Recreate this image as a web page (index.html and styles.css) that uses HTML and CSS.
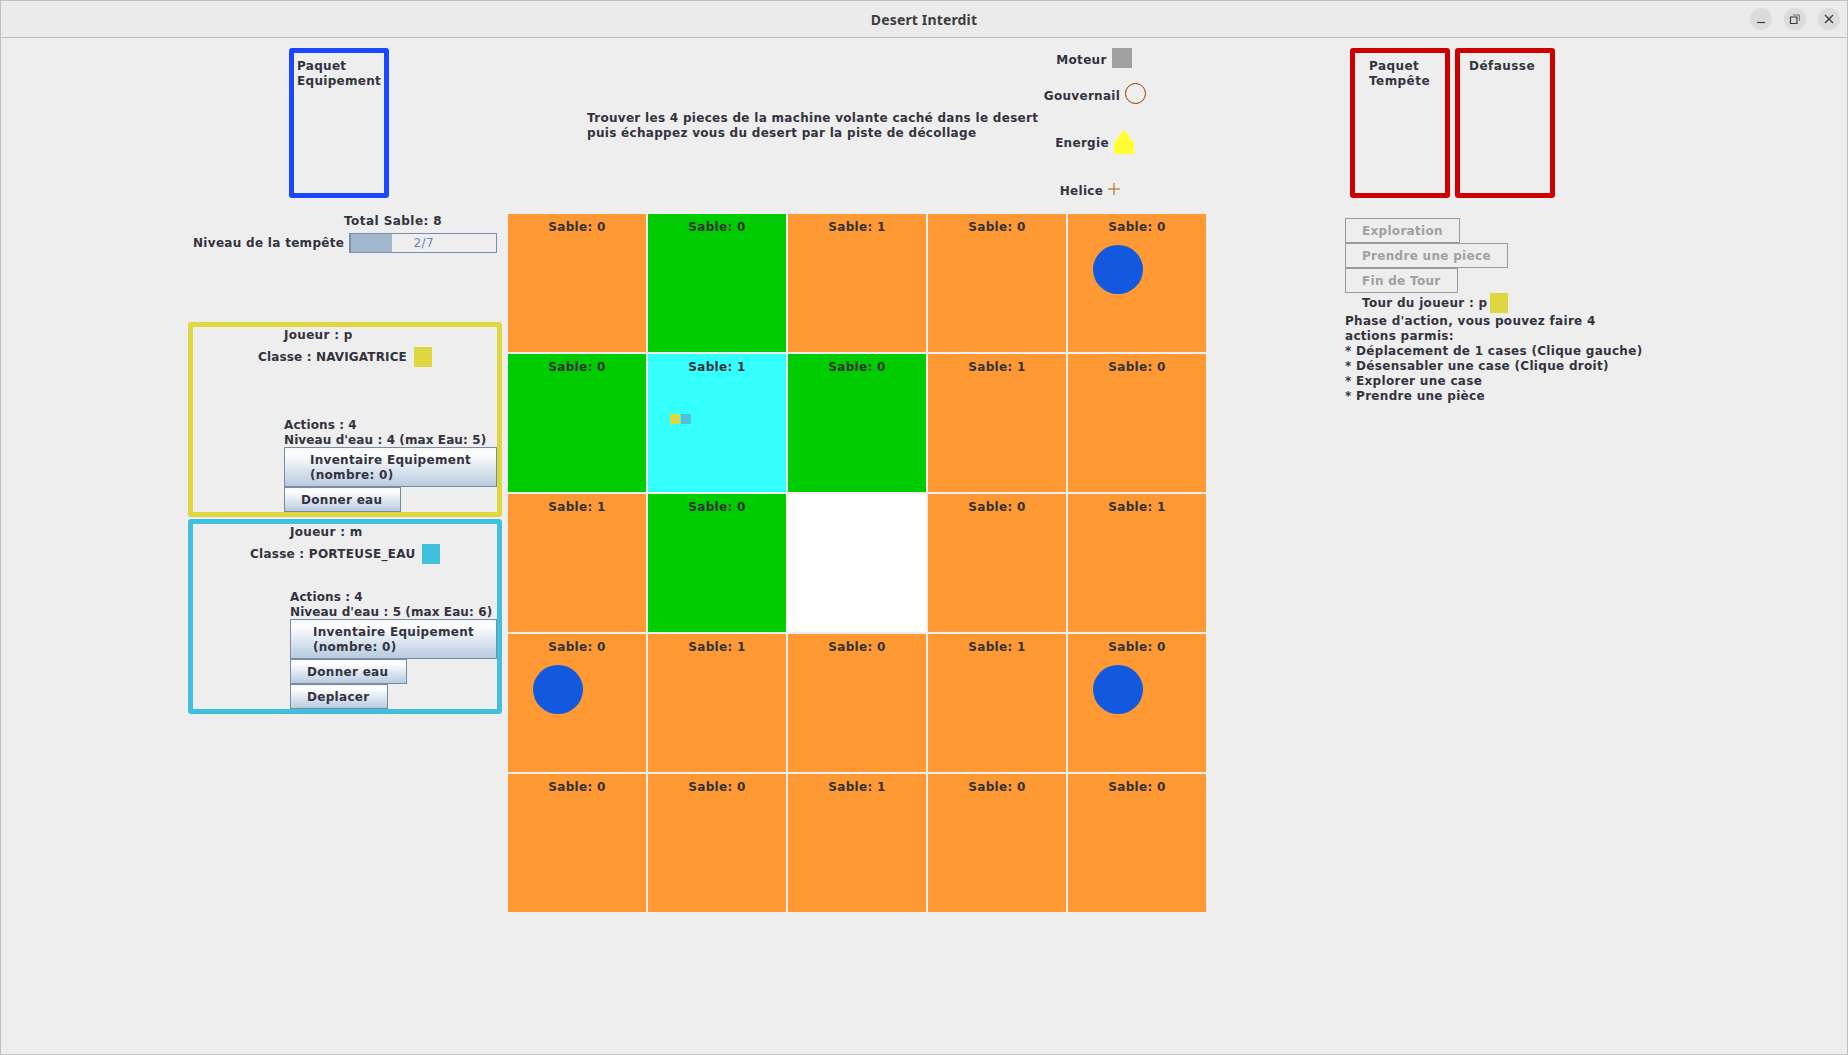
FILE: index.html
```html
<!DOCTYPE html>
<html lang="fr">
<head>
    <meta charset="UTF-8">
    <meta name="viewport" content="width=device-width, initial-scale=1.0">
    <title>Desert Interdit</title>
    <link rel="stylesheet" href="styles.css">
</head>
<body>
    <div class="window">
        <div class="titlebar">
            <div class="title">Desert Interdit</div>
            <div class="win-buttons">
                <div class="win-btn">
                    <svg width="12" height="12" viewBox="0 0 12 12"><path d="M2 9.500h8" stroke="#3d3d3d" stroke-width="1.2" fill="none"/></svg>
                </div>
                <div class="win-btn">
                    <svg width="12" height="12" viewBox="0 0 12 12"><path d="M1.500 4h6.500v6.500h-6.500z" stroke="#3d3d3d" stroke-width="1.2" fill="none"/><path d="M4 2h6.500v6" stroke="#777" stroke-width="1" fill="none"/></svg>
                </div>
                <div class="win-btn">
                    <svg width="12" height="12" viewBox="0 0 12 12"><path d="M2 2l8 8M10 2l-8 8" stroke="#3d3d3d" stroke-width="1.4" fill="none"/></svg>
                </div>
            </div>
        </div>

        <div class="content">
            <div class="top-left">
                <div class="deck deck-blue">Paquet<br>Equipement</div>
            </div>

            <div class="top-center">
                <div class="goal">Trouver les 4 pieces de la machine volante caché dans le desert<br>puis échappez vous du desert par la piste de décollage</div>
                <div class="legend">
                    <div class="legend-row moteur"><span>Moteur</span><div class="piece-square"></div></div>
                    <div class="legend-row gouvernail"><span>Gouvernail</span><div class="piece-circle"></div></div>
                    <div class="legend-row energie"><span>Energie</span>
                        <svg class="piece-energy" width="20" height="25" viewBox="0 0 20 25"><path d="M10 0L20 14V25H0V14Z" fill="#ffff33"/></svg>
                    </div>
                    <div class="legend-row helice"><span>Helice</span>
                        <svg class="piece-helice" width="12" height="12" viewBox="0 0 12 12"><path d="M6 0v12M0 6h12" stroke="#b35900" stroke-width="1" fill="none"/></svg>
                    </div>
                </div>
            </div>

            <div class="top-right">
                <div class="deck deck-red deck-tempete">Paquet<br>Tempête</div>
                <div class="deck deck-red deck-defausse">Défausse</div>
            </div>

            <div class="left-col">
                <div class="total-sable">Total Sable: 8</div>
                <div class="storm">
                    <span>Niveau de la tempête</span>
                    <div class="storm-bar"><div class="storm-fill"></div><div class="storm-text">2/7</div></div>
                </div>

                <div class="player player-yellow">
                    <div class="player-name">Joueur : p</div>
                    <div class="player-class"><span>Classe : NAVIGATRICE</span><div class="swatch"></div></div>
                    <div class="player-bottom">
                        <div class="stat">Actions : 4</div>
                        <div class="stat">Niveau d'eau : 4 (max Eau: 5)</div>
                        <button class="btn btn-inv"><span>Inventaire Equipement<br>(nombre: 0)</span></button>
                        <button class="btn btn-small">Donner eau</button>
                    </div>
                </div>

                <div class="player player-blue">
                    <div class="player-name">Joueur : m</div>
                    <div class="player-class"><span>Classe : PORTEUSE_EAU</span><div class="swatch"></div></div>
                    <div class="player-bottom">
                        <div class="stat">Actions : 4</div>
                        <div class="stat">Niveau d'eau : 5 (max Eau: 6)</div>
                        <button class="btn btn-inv"><span>Inventaire Equipement<br>(nombre: 0)</span></button>
                        <button class="btn btn-small">Donner eau</button>
                        <button class="btn btn-small">Deplacer</button>
                    </div>
                </div>
            </div>

            <div class="board">
                <div class="cell orange"><div class="sable">Sable: 0</div></div>
                <div class="cell green"><div class="sable">Sable: 0</div></div>
                <div class="cell orange"><div class="sable">Sable: 1</div></div>
                <div class="cell orange"><div class="sable">Sable: 0</div></div>
                <div class="cell orange"><div class="sable">Sable: 0</div><div class="well"></div></div>

                <div class="cell green"><div class="sable">Sable: 0</div></div>
                <div class="cell cyan"><div class="sable">Sable: 1</div>
                    <div class="pawns"><div class="pawn pawn-yellow"></div><div class="pawn pawn-blue"></div></div>
                </div>
                <div class="cell green"><div class="sable">Sable: 0</div></div>
                <div class="cell orange"><div class="sable">Sable: 1</div></div>
                <div class="cell orange"><div class="sable">Sable: 0</div></div>

                <div class="cell orange"><div class="sable">Sable: 1</div></div>
                <div class="cell green"><div class="sable">Sable: 0</div></div>
                <div class="cell white"></div>
                <div class="cell orange"><div class="sable">Sable: 0</div></div>
                <div class="cell orange"><div class="sable">Sable: 1</div></div>

                <div class="cell orange"><div class="sable">Sable: 0</div><div class="well"></div></div>
                <div class="cell orange"><div class="sable">Sable: 1</div></div>
                <div class="cell orange"><div class="sable">Sable: 0</div></div>
                <div class="cell orange"><div class="sable">Sable: 1</div></div>
                <div class="cell orange"><div class="sable">Sable: 0</div><div class="well"></div></div>

                <div class="cell orange"><div class="sable">Sable: 0</div></div>
                <div class="cell orange"><div class="sable">Sable: 0</div></div>
                <div class="cell orange"><div class="sable">Sable: 1</div></div>
                <div class="cell orange"><div class="sable">Sable: 0</div></div>
                <div class="cell orange"><div class="sable">Sable: 0</div></div>
            </div>

            <div class="right-col">
                <button class="btn-off">Exploration</button>
                <button class="btn-off">Prendre une piece</button>
                <button class="btn-off">Fin de Tour</button>
                <div class="turn"><span>Tour du joueur : p</span><div class="swatch"></div></div>
                <div class="help">Phase d'action, vous pouvez faire 4<br>actions parmis:<br>* Déplacement de 1 cases (Clique gauche)<br>* Désensabler une case (Clique droit)<br>* Explorer une case<br>* Prendre une pièce</div>
            </div>
        </div>
    </div>
</body>
</html>
```

FILE: styles.css
```css
* {
    box-sizing: border-box;
}
body {
    margin: 0;
    font-family: 'DejaVu Sans', sans-serif;
    font-size: 12px;
    font-weight: bold;
    line-height: 15px;
    letter-spacing: 0.3px;
    color: #333340;
}
.window {
    width: 1848px;
    height: 1055px;
    background: #eeeeee;
    border: 1px solid #c0c0c0;
    border-bottom-color: #c8c8c8;
    overflow: hidden;
}
.titlebar {
    height: 37px;
    background: #ebebeb;
    border-bottom: 1px solid #bdbdbd;
    display: flex;
    align-items: center;
    justify-content: center;
    position: relative;
}
.title {
    font-family: 'Noto Sans', sans-serif;
    font-size: 14px;
    letter-spacing: 0.15px;
    color: #3d3d3d;
}
.win-buttons {
    position: absolute;
    right: 7px;
    top: 7px;
    display: flex;
    gap: 12px;
}
.win-btn {
    width: 22px;
    height: 22px;
    border-radius: 50%;
    background: #dcdcdc;
    display: flex;
    align-items: center;
    justify-content: center;
}

.content {
    display: grid;
    grid-template-columns: 507px 698px 1fr;
    grid-template-rows: 174px 1fr;
}

/* decks */
.deck {
    width: 100px;
    height: 150px;
    border: 5px solid;
    border-radius: 3px;
}
.deck-blue {
    border-color: #1a47ff;
    padding: 6px 0 0 3px;
}
.deck-red {
    border-color: #cc0000;
    letter-spacing: 0.45px;
}
.deck-tempete {
    padding: 6px 0 0 14px;
}
.deck-defausse {
    padding: 6px 0 0 9px;
}
.top-left {
    padding: 10px 0 0 288px;
}
.top-right {
    padding: 10px 0 0 144px;
    display: flex;
    gap: 5px;
}

/* goal + legend */
.top-center {
    display: flex;
    align-items: center;
}
.goal {
    margin-left: 79px;
    padding-top: 2px;
    width: 453px;
    white-space: nowrap;
}
.legend {
    width: 110px;
    align-self: flex-start;
    padding-top: 10px;
    display: flex;
    flex-direction: column;
    align-items: center;
}
.legend-row {
    display: flex;
    align-items: center;
    gap: 5px;
    white-space: nowrap;
}
.moteur {
    align-items: flex-end;
    margin-right: 2px;
}
.gouvernail {
    margin-top: 15px;
}
.gouvernail span {
    padding-top: 5px;
}
.energie {
    margin-top: 25px;
    margin-right: 1px;
}
.energie span {
    padding-top: 3px;
}
.helice {
    margin-top: 27px;
    margin-right: 10px;
}
.helice span {
    padding-top: 3px;
}
.piece-square {
    width: 20px;
    height: 20px;
    background: #a0a0a0;
}
.piece-circle {
    width: 21px;
    height: 21px;
    border: 1px solid #993300;
    border-radius: 50%;
}
.piece-helice {
    margin-top: -3px;
}

/* left column */
.left-col {
    padding-left: 187px;
}
.total-sable {
    margin-top: 2px;
    padding-left: 156px;
    letter-spacing: 0.45px;
    white-space: nowrap;
}
.storm {
    display: flex;
    align-items: center;
    margin-top: 4px;
    padding-left: 5px;
    gap: 5px;
    white-space: nowrap;
}
.storm span {
    padding-top: 1px;
}
.storm-bar {
    width: 148px;
    height: 20px;
    border: 1px solid #7a8fb0;
    border-left-width: 2px;
    background: #eeeeee;
    position: relative;
}
.storm-fill {
    width: 41px;
    height: 100%;
    background: #a3b8cc;
}
.storm-text {
    position: absolute;
    inset: 0;
    text-align: center;
    font-weight: normal;
    color: #6a80c4;
    line-height: 19px;
}

.player {
    width: 314px;
    height: 195px;
    border: 5px solid;
    border-radius: 3px;
    display: flex;
    flex-direction: column;
}
.player-yellow {
    margin-top: 69px;
    border-color: #dfd73f;
    --pad: 91px;
    --pad-class: 65px;
}
.player-blue {
    margin-top: 2px;
    border-color: #40c0dd;
    --pad: 97px;
    --pad-class: 57px;
}
.player-name {
    padding: 1px 0 0 var(--pad);
}
.player-class {
    display: flex;
    align-items: center;
    gap: 7px;
    margin-top: 4px;
    padding-left: var(--pad-class);
    letter-spacing: 0.15px;
    white-space: nowrap;
}
.player-blue .player-class {
    letter-spacing: 0.25px;
}
.player-class span {
    padding-top: 1px;
}
.player-yellow .swatch, .turn .swatch {
    background: #dfd73f;
}
.player-blue .swatch {
    background: #40c0dd;
}
.swatch {
    width: 18px;
    height: 20px;
}
.player-bottom {
    margin-top: auto;
    padding-left: var(--pad);
    display: flex;
    flex-direction: column;
    white-space: nowrap;
}
.stat {
    height: 15px;
    padding-top: 2px;
    line-height: 13px;
    letter-spacing: 0.1px;
}
.btn, .btn-off {
    font: inherit;
    letter-spacing: 0.3px;
    color: inherit;
    text-align: left;
    display: block;
    height: 25px;
    padding: 2px 18px 0 16px;
    margin: 0;
    border-radius: 0;
    white-space: nowrap;
}
.btn {
    border: 1px solid #7a8a9f;
    background: linear-gradient(to bottom, #f4f8fc, #fff 15%, #b8cbe0);
    align-self: flex-start;
}
.btn-inv {
    height: 40px;
    align-self: stretch;
    display: flex;
    justify-content: center;
    align-items: center;
    padding: 2px 0 0;
}

/* board */
.board {
    margin-top: 2px;
    width: 698px;
    display: grid;
    grid-template-columns: repeat(5, 138px);
    grid-auto-rows: 138px;
    gap: 2px;
}
.cell {
    padding-top: 6px;
    text-align: center;
}
.sable {
    color: #333;
}
.orange {
    background: #ff9933;
}
.green {
    background: #00cc00;
}
.cyan {
    background: #33ffff;
}
.white {
    background: #ffffff;
}
.well {
    width: 50px;
    height: 49px;
    border-radius: 50%;
    background: #1259e0;
    margin: 10px 0 0 25px;
}
.pawns {
    display: flex;
    gap: 1px;
    margin: 39px 0 0 22px;
}
.pawn {
    width: 10px;
    height: 10px;
}
.pawn-yellow {
    background: #dfd73f;
}
.pawn-blue {
    background: #4cc0dd;
}

/* right column */
.right-col {
    margin-top: 6px;
    padding-left: 139px;
    display: flex;
    flex-direction: column;
    align-items: flex-start;
}
.btn-off {
    background: #eeeeee;
    border: 1px solid #9a9a9a;
    color: #a0a0a0;
    padding-right: 16px;
}
.turn {
    display: flex;
    align-items: center;
    gap: 3px;
    padding-left: 17px;
    white-space: nowrap;
}
.help {
    padding-top: 1px;
    white-space: nowrap;
}
```
